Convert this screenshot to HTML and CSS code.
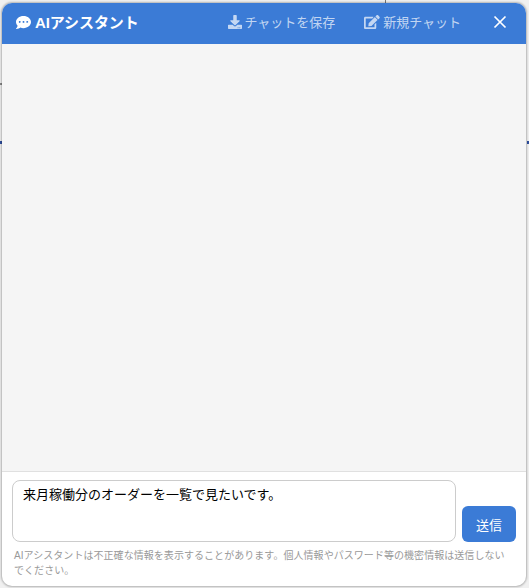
FILE: index.html
```html
<!DOCTYPE html>
<html lang="ja">
<head>
<meta charset="utf-8">
<title>AIアシスタント</title>
<link rel="stylesheet" href="styles.css">
</head>
<body>
<span class="bg-line"></span>
<span class="bg-mark bg-mark-gray"></span>
<span class="bg-mark bg-mark-left"></span>
<span class="bg-mark bg-mark-right"></span>
<main class="panel">
  <header class="header">
    <div class="title">
      <svg class="icon-chat" viewBox="0 0 512 512"><path fill="#fff" d="M256 32C114.600 32 0 125.100 0 240c0 49.600 21.400 95 57 130.700C44.500 421.100 2.700 466 2.200 466.500c-2.200 2.300-2.800 5.700-1.500 8.700S4.800 480 8 480c66.300 0 116-31.800 140.600-51.400 32.700 12.300 69 19.400 107.400 19.400 141.400 0 256-93.100 256-208S397.400 32 256 32zM128 272c-17.700 0-32-14.300-32-32s14.300-32 32-32 32 14.300 32 32-14.300 32-32 32zm128 0c-17.700 0-32-14.300-32-32s14.300-32 32-32 32 14.300 32 32-14.300 32-32 32zm128 0c-17.700 0-32-14.300-32-32s14.300-32 32-32 32 14.300 32 32-14.300 32-32 32z"/></svg>
      <span>AIアシスタント</span>
    </div>
    <div class="actions">
      <button class="action action-save" type="button">
        <svg class="icon-action" viewBox="0 0 512 512"><path fill="currentColor" d="M216 0h80c13.300 0 24 10.700 24 24v168h87.700c17.800 0 26.700 21.500 14.100 34.100L269.700 378.300c-7.500 7.500-19.800 7.500-27.300 0L90.100 226.100c-12.600-12.600-3.700-34.100 14.100-34.100H192V24c0-13.300 10.700-24 24-24zm296 376v112c0 13.300-10.700 24-24 24H24c-13.300 0-24-10.700-24-24V376c0-13.300 10.700-24 24-24h146.700l49 49c20.100 20.100 52.500 20.100 72.600 0l49-49H488c13.300 0 24 10.700 24 24zm-124 88c0-11-9-20-20-20s-20 9-20 20 9 20 20 20 20-9 20-20zm64 0c0-11-9-20-20-20s-20 9-20 20 9 20 20 20 20-9 20-20z"/></svg>
        <span>チャットを保存</span>
      </button>
      <button class="action action-new" type="button">
        <svg class="icon-action" viewBox="0 0 576 512"><path fill="currentColor" d="M402.600 83.200l90.200 90.200c3.800 3.800 3.800 10 0 13.800L274.400 405.600l-92.800 10.300c-12.400 1.400-22.900-9.100-21.500-21.500l10.300-92.800L388.800 83.200c3.800-3.800 10-3.800 13.800 0zm162-22.900l-48.800-48.800c-15.200-15.200-39.900-15.200-55.200 0l-35.400 35.400c-3.800 3.800-3.800 10 0 13.800l90.200 90.200c3.800 3.800 10 3.800 13.800 0l35.400-35.400c15.200-15.300 15.200-40 0-55.200zM384 346.200V448H64V128h229.800c3.200 0 6.200-1.300 8.500-3.500l40-40c7.600-7.600 2.200-20.500-8.500-20.500H48C21.500 64 0 85.500 0 112v352c0 26.500 21.500 48 48 48h352c26.500 0 48-21.500 48-48V306.200c0-10.700-12.900-16-20.500-8.500l-40 40c-2.200 2.300-3.500 5.300-3.500 8.500z"/></svg>
        <span>新規チャット</span>
      </button>
      <button class="close" type="button" aria-label="閉じる">
        <svg class="icon-close" viewBox="0 0 14 14"><path d="M1.500 1.500l11 11M12.500 1.500l-11 11" stroke="#fff" stroke-width="1.700" fill="none"/></svg>
      </button>
    </div>
  </header>
  <section class="messages"></section>
  <footer class="footer">
    <div class="composer">
      <div class="input">来月稼働分のオーダーを一覧で見たいです。</div>
      <button class="send" type="button">送信</button>
    </div>
    <p class="note">AIアシスタントは不正確な情報を表示することがあります。個人情報やパスワード等の機密情報は送信しないでください。</p>
  </footer>
</main>
</body>
</html>
```
FILE: styles.css
```css
* { box-sizing: border-box; }
html, body { margin: 0; height: 588px; overflow: hidden; }
body {
  position: relative;
  padding: 3px 3px 2px 2px;
  background: #f0f0f0;
  font-family: "Liberation Sans", "Noto Sans CJK JP", sans-serif;
}
.bg-line { position: absolute; left: 385px; top: 0; width: 1px; height: 3px; background: #777; }
.bg-mark { position: absolute; height: 2px; width: 2px; }
.bg-mark-gray { left: 0; top: 83px; background: #888; }
.bg-mark-left { left: 0; top: 141px; height: 3px; background: #2f4f9f; }
.bg-mark-right { right: 0; top: 141px; height: 3px; background: #2f4f9f; }
.panel {
  position: relative;
  height: 583px;
  display: flex;
  flex-direction: column;
  background: #fff;
  border-radius: 10px;
  overflow: hidden;
  box-shadow: 0 0 2px 1px rgba(0, 0, 0, 0.25);
}
.header {
  height: 41px;
  flex: none;
  display: flex;
  align-items: center;
  justify-content: space-between;
  padding: 0 19px 4px 14px;
  background: #3b7bd6;
  color: #fff;
}
.title { display: flex; align-items: center; gap: 4px; font-size: 15px; font-weight: 700; letter-spacing: -0.1px; }
.icon-chat { width: 15px; height: 15px; margin-top: 1px; }
.actions { display: flex; align-items: center; }
button { font-family: inherit; border: 0; padding: 0; background: none; }
.action {
  display: flex;
  align-items: center;
  gap: 3px;
  font-size: 13px;
  color: rgba(255, 255, 255, 0.7);
}
.action-save { margin-right: 29px; }
.action-new { margin-right: 32px; }
.icon-action { height: 14px; width: auto; }
.close { display: flex; }
.icon-close { width: 14px; height: 14px; }
.messages { flex: 1; background: #f5f5f5; border-bottom: 1px solid #e0e0e0; }
.footer { flex: none; height: 114px; padding: 8px 10px 0; }
.composer { display: flex; align-items: flex-end; gap: 6px; }
.input {
  width: 444px;
  height: 62px;
  padding: 5px 10px;
  border: 1px solid #ccc;
  border-radius: 8px;
  font-size: 13px;
  line-height: 18px;
  color: #000;
}
.send {
  width: 54px;
  height: 36px;
  background: #3b7bd6;
  border-radius: 6px;
  color: #fff;
  font-size: 13px;
}
.note {
  margin: 6px 10px 0 2px;
  font-size: 10px;
  line-height: 15px;
  letter-spacing: 0.05px;
  color: #999;
}
```
